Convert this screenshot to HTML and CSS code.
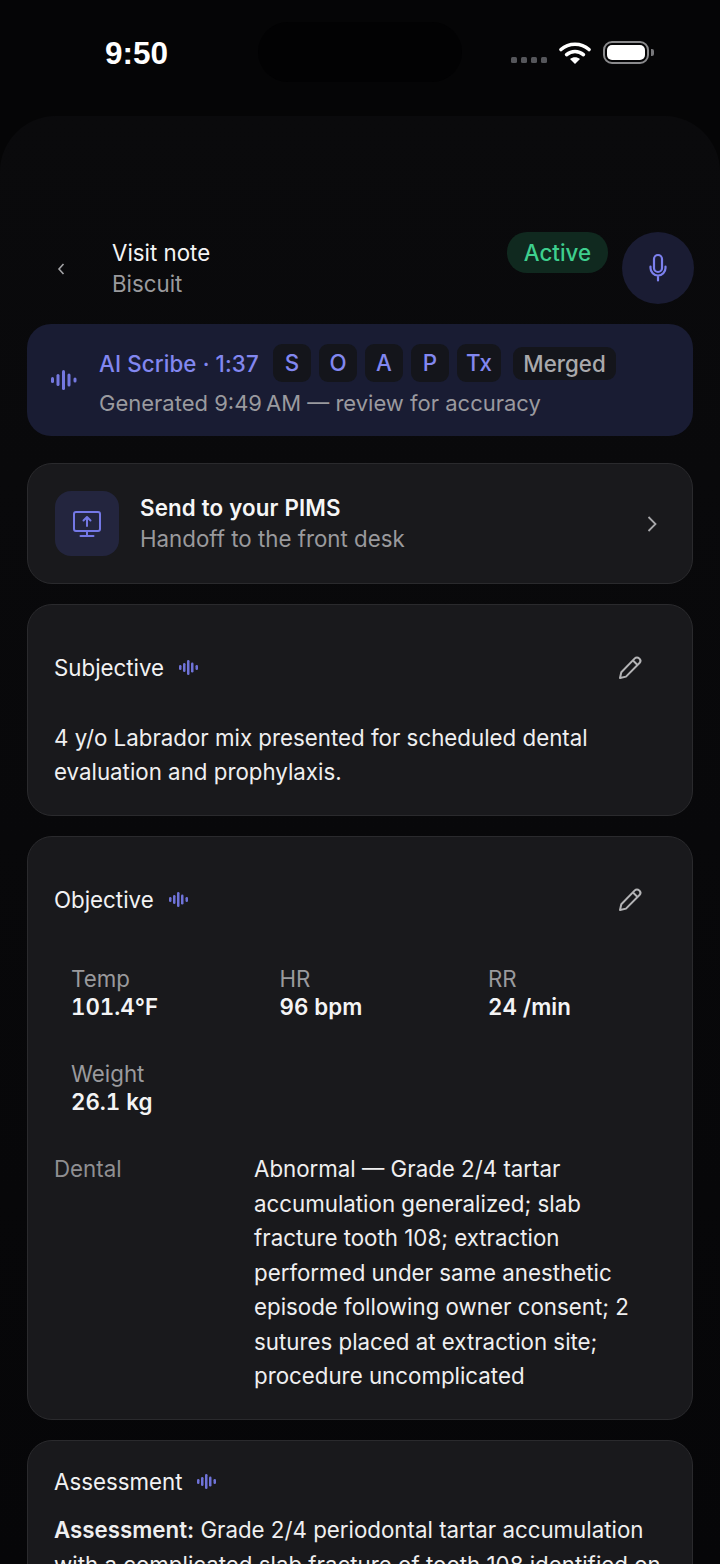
FILE: index.html
```html
<!DOCTYPE html>
<html lang="en">
<head>
    <meta charset="UTF-8">
    <meta name="viewport" content="width=device-width, initial-scale=1.0">
    <title>Visit note</title>
    <link rel="stylesheet" href="styles.css">
</head>
<body>
    <div class="status-bar">
        <div class="time">9:50</div>
        <div class="island"></div>
        <div class="status-icons">
            <div class="signal"><i></i><i></i><i></i><i></i></div>
            <svg class="wifi" width="32" height="22" viewBox="0 0 32 22">
                <path d="M2 7.500C9.800 .5 22.200 .5 30 7.500" fill="none" stroke="#fff" stroke-width="3.600" stroke-linecap="round"/>
                <path d="M7.600 12.600C12.400 8.400 19.600 8.400 24.400 12.600" fill="none" stroke="#fff" stroke-width="3.600" stroke-linecap="round"/>
                <path d="M11 17C14 14.800 18 14.800 21 17L16 22Z" fill="#fff"/>
            </svg>
            <div class="battery"><div class="battery-fill"></div></div>
            <div class="battery-cap"></div>
        </div>
    </div>

    <div class="sheet">
        <header class="top">
            <svg class="back" width="10" height="14" viewBox="0 0 10 14"><path d="M7.500 2L3 7l4.500 5" fill="none" stroke="#a3a3a6" stroke-width="1.600"/></svg>
            <div class="title-block">
                <div class="title">Visit note</div>
                <div class="subtitle">Biscuit</div>
            </div>
            <div class="active-pill">Active</div>
            <div class="mic-btn">
                <svg width="28" height="30" viewBox="0 0 28 30" fill="none" stroke="#7c80ee" stroke-width="2.200" stroke-linecap="round">
                    <rect x="10" y="2" width="8" height="17" rx="4"/>
                    <path d="M6.500 13.500v1.500a7.500 7.500 0 0 0 15 0v-1.500M14 22.500v5"/>
                </svg>
            </div>
        </header>

        <section class="scribe">
            <svg class="wave" width="26" height="20" viewBox="0 0 26 20" fill="#7478e0">
                <rect x="0" y="7" width="3" height="6" rx="1.500"/><rect x="5.500" y="4" width="3" height="12" rx="1.500"/><rect x="11" y="0" width="3" height="20" rx="1.500"/><rect x="16.500" y="3.500" width="3" height="13" rx="1.500"/><rect x="22.500" y="7.500" width="3" height="5" rx="1.500"/>
            </svg>
            <div class="scribe-body">
                <div class="scribe-top">
                    <span class="scribe-label">AI Scribe · 1:37</span>
                    <span class="chip">S</span>
                    <span class="chip">O</span>
                    <span class="chip">A</span>
                    <span class="chip">P</span>
                    <span class="chip chip-tx">Tx</span>
                    <span class="chip chip-merged">Merged</span>
                </div>
                <div class="scribe-sub">Generated 9:49&#8239;AM — review for accuracy</div>
            </div>
        </section>

        <section class="card pims">
            <div class="pims-icon">
                <svg width="30" height="28" viewBox="0 0 30 28" fill="none" stroke="#7478e6" stroke-width="2" stroke-linecap="round" stroke-linejoin="round">
                    <rect x="2" y="2" width="26" height="19" rx="2"/>
                    <path d="M15 16V7.500M11.500 10.500L15 7l3.500 3.500M15 21v5M8.500 26h13"/>
                </svg>
            </div>
            <div class="pims-text">
                <div class="pims-title">Send to your PIMS</div>
                <div class="pims-sub">Handoff to the front desk</div>
            </div>
            <svg class="chev" width="12" height="18" viewBox="0 0 12 18"><path d="M2.500 2l7 7-7 7" fill="none" stroke="#a8a8ab" stroke-width="1.800"/></svg>
        </section>

        <section class="card note subjective">
            <div class="note-head">
                <span class="note-title">Subjective</span>
                <svg class="wave-sm" width="19" height="15" viewBox="0 0 19 15" fill="#6f73d8"><rect x="0" y="5" width="2.500" height="5" rx="1.200"/><rect x="4" y="3" width="2.500" height="9" rx="1.200"/><rect x="8" y="0" width="2.500" height="15" rx="1.200"/><rect x="12" y="2.500" width="2.500" height="10" rx="1.200"/><rect x="16.500" y="5" width="2.500" height="5" rx="1.200"/></svg>
                <svg class="pencil" width="26" height="26" viewBox="0 0 26 26" fill="none" stroke="#b4b4b6" stroke-width="2" stroke-linejoin="round"><path d="M3 23l1.300-5.700L17.800 3.400a3 3 0 0 1 4.300 0l.4.4a3 3 0 0 1 0 4.200L9 21.600z"/><path d="M16 5.500l4.500 4.500"/></svg>
            </div>
            <p class="note-text">4 y/o Labrador mix presented for scheduled dental evaluation and prophylaxis.</p>
        </section>

        <section class="card note objective">
            <div class="note-head">
                <span class="note-title">Objective</span>
                <svg class="wave-sm" width="19" height="15" viewBox="0 0 19 15" fill="#6f73d8"><rect x="0" y="5" width="2.500" height="5" rx="1.200"/><rect x="4" y="3" width="2.500" height="9" rx="1.200"/><rect x="8" y="0" width="2.500" height="15" rx="1.200"/><rect x="12" y="2.500" width="2.500" height="10" rx="1.200"/><rect x="16.500" y="5" width="2.500" height="5" rx="1.200"/></svg>
                <svg class="pencil" width="26" height="26" viewBox="0 0 26 26" fill="none" stroke="#b4b4b6" stroke-width="2" stroke-linejoin="round"><path d="M3 23l1.300-5.700L17.800 3.400a3 3 0 0 1 4.300 0l.4.4a3 3 0 0 1 0 4.200L9 21.600z"/><path d="M16 5.500l4.500 4.500"/></svg>
            </div>
            <div class="vitals">
                <div class="vital"><div class="vital-label">Temp</div><div class="vital-value">101.4°F</div></div>
                <div class="vital"><div class="vital-label">HR</div><div class="vital-value">96 bpm</div></div>
                <div class="vital"><div class="vital-label">RR</div><div class="vital-value">24 /min</div></div>
                <div class="vital"><div class="vital-label">Weight</div><div class="vital-value">26.1 kg</div></div>
            </div>
            <div class="finding">
                <div class="finding-label">Dental</div>
                <div class="finding-text">Abnormal — Grade 2/4 tartar accumulation generalized; slab fracture tooth 108; extraction performed under same anesthetic episode following owner consent; 2 sutures placed at extraction site; procedure uncomplicated</div>
            </div>
        </section>

        <section class="card note assessment">
            <div class="note-head">
                <span class="note-title">Assessment</span>
                <svg class="wave-sm" width="19" height="15" viewBox="0 0 19 15" fill="#6f73d8"><rect x="0" y="5" width="2.500" height="5" rx="1.200"/><rect x="4" y="3" width="2.500" height="9" rx="1.200"/><rect x="8" y="0" width="2.500" height="15" rx="1.200"/><rect x="12" y="2.500" width="2.500" height="10" rx="1.200"/><rect x="16.500" y="5" width="2.500" height="5" rx="1.200"/></svg>
            </div>
            <p class="note-text"><b>Assessment:</b> Grade 2/4 periodontal tartar accumulation with a complicated slab fracture of tooth 108 identified on examination.</p>
        </section>
    </div>
</body>
</html>
```

FILE: styles.css
```css
html, body {
    margin: 0;
    padding: 0;
}
body {
    width: 720px;
    height: 1564px;
    overflow: hidden;
    background-color: #050506;
    font-family: Inter, "Liberation Sans", sans-serif;
    font-size: 22.300px;
    color: #f2f2f3;
}

/* status bar */
.status-bar {
    height: 116px;
    display: flex;
    align-items: flex-start;
    box-sizing: border-box;
    padding: 22px 0 0 105px;
}
.time {
    font-family: "Liberation Sans", sans-serif;
    font-size: 31.500px;
    font-weight: bold;
    line-height: 62px;
    height: 62px;
    width: 63px;
    color: #fff;
}
.island {
    width: 204px;
    height: 60px;
    margin-left: 90px;
    border-radius: 30px;
    background-color: #020203;
}
.status-icons {
    display: flex;
    align-items: center;
    height: 62px;
    margin-left: 49px;
}
.signal {
    display: flex;
    gap: 4px;
    margin-top: 14px;
}
.signal i {
    width: 6px;
    height: 6px;
    border-radius: 1.500px;
    background-color: #55565a;
}
.wifi {
    margin-left: 12px;
    margin-top: -1px;
}
.battery {
    box-sizing: border-box;
    width: 46px;
    height: 23px;
    margin-left: 12px;
    margin-top: -1px;
    padding: 2px;
    border: 2px solid #8a8a8c;
    border-radius: 9px;
}
.battery-fill {
    height: 100%;
    border-radius: 5px;
    background-color: #fff;
}
.battery-cap {
    width: 3px;
    height: 7px;
    margin-left: 2px;
    margin-top: -1px;
    border-radius: 0 2px 2px 0;
    background-color: #77777a;
}

/* sheet */
.sheet {
    height: 1448px;
    box-sizing: border-box;
    padding: 116px 27px 0;
    border-radius: 56px 56px 0 0;
    background: linear-gradient(#0a0a0c, #060608);
}
.top {
    display: flex;
    align-items: flex-start;
    height: 92px;
    margin-right: -1px;
}
.back {
    margin: 30px 0 0 29px;
}
.title-block {
    margin-left: 46px;
    flex-grow: 1;
}
.title {
    line-height: 42px;
    color: #f4f4f5;
}
.subtitle {
    line-height: 20px;
    color: #9a9a9d;
}
.active-pill {
    height: 41px;
    line-height: 41px;
    padding: 0 17px;
    border-radius: 20px;
    background-color: #10291f;
    color: #3ecf8e;
    font-weight: 500;
}
.mic-btn {
    display: flex;
    align-items: center;
    justify-content: center;
    width: 72px;
    height: 72px;
    margin-left: 14px;
    border-radius: 50%;
    background-color: #1a1c33;
}

/* scribe banner */
.scribe {
    display: flex;
    align-items: center;
    height: 112px;
    box-sizing: border-box;
    padding-left: 24px;
    border-radius: 24px;
    background-color: #191c33;
}
.scribe-body {
    margin-left: 22px;
}
.scribe-top {
    display: flex;
    align-items: center;
    gap: 8px;
    height: 38px;
}
.scribe-label {
    width: 163px;
    margin-right: 3px;
    letter-spacing: .12px;
    white-space: nowrap;
    color: #8287f0;
    font-weight: 500;
}
.chip {
    height: 38px;
    line-height: 38px;
    width: 38px;
    text-align: center;
    border-radius: 9px;
    background-color: #14151b;
    color: #8287f0;
    font-weight: 500;
}
.chip-tx {
    width: 44px;
}
.chip-merged {
    width: 103px;
    margin-left: 4px;
    height: 33px;
    line-height: 33px;
    color: #a9a9ac;
}
.scribe-sub {
    margin-top: 8px;
    font-size: 22px;
    color: #9a9a9f;
}

/* cards */
.card {
    box-sizing: border-box;
    border: 1px solid #2a2a2d;
    border-radius: 25px;
    background-color: #19191c;
}
.pims {
    display: flex;
    align-items: center;
    height: 121px;
    margin-top: 27px;
    padding: 0 34px 0 27px;
}
.pims-icon {
    display: flex;
    align-items: center;
    justify-content: center;
    width: 64px;
    height: 65px;
    border-radius: 16px;
    background-color: #23253e;
}
.pims-text {
    flex-grow: 1;
    margin-left: 21px;
    margin-top: -2px;
}
.pims-title {
    line-height: 31px;
    font-weight: 600;
    letter-spacing: .18px;
    color: #f6f6f7;
}
.pims-sub {
    line-height: 31px;
    color: #9a9a9d;
}
.note {
    margin-top: 20px;
    padding: 0 26px;
}
.note-head {
    display: flex;
    align-items: center;
    height: 26px;
    padding-top: 49px;
    gap: 15px;
}
.pencil {
    margin: 2px 23px 0 auto;
}
.note-text {
    margin: 40.500px 0 0;
    line-height: 34.500px;
    color: #efeff0;
}
.subjective {
    height: 212px;
}
.objective {
    height: 584px;
}

/* objective */
.vitals {
    display: grid;
    grid-template-columns: repeat(3, 208.500px);
    row-gap: 39px;
    margin: 53px 0 0 17px;
    font-variant-numeric: tabular-nums;
}
.vital-label {
    line-height: 28px;
    color: #9a9a9d;
}
.vital-value {
    line-height: 28px;
    font-weight: 600;
    color: #f4f4f5;
}
.finding {
    display: grid;
    grid-template-columns: 200px 1fr;
    margin-top: 36px;
    padding-right: 30px;
    line-height: 34.500px;
}
.finding-label {
    color: #8f8f92;
}
.finding-text {
    color: #efeff0;
}

/* assessment */
.assessment {
    height: 200px;
}
.assessment .note-head {
    padding-top: 27px;
}
.assessment .note-text {
    margin-top: 19px;
}
.assessment b {
    font-weight: 600;
}
```
